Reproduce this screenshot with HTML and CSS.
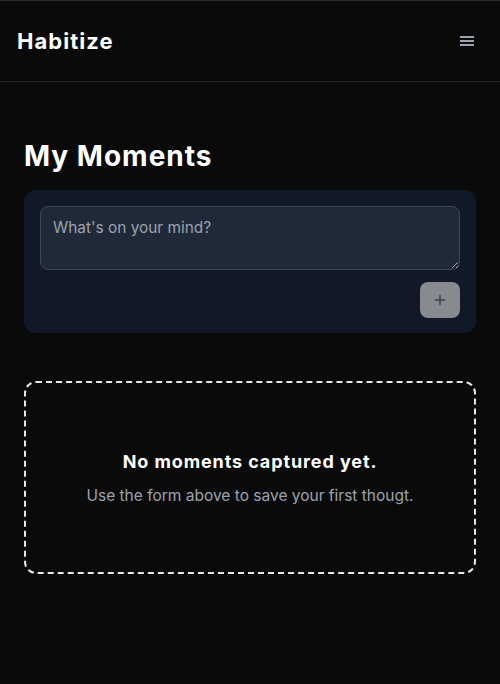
FILE: index.html
```html
<!DOCTYPE html>
<html lang="en">
<head>
<meta charset="utf-8">
<title>Habitize</title>
<link rel="stylesheet" href="styles.css">
</head>
<body>
<header class="topbar">
  <div class="brand">Habitize</div>
  <button class="menu-btn" aria-label="Menu">
    <svg width="14" height="10" viewBox="0 0 14 10"><rect x="0" y="0" width="14" height="2" fill="#9ca3af"/><rect x="0" y="4" width="14" height="2" fill="#9ca3af"/><rect x="0" y="8" width="14" height="2" fill="#9ca3af"/></svg>
  </button>
</header>
<main class="content">
  <h1 class="page-title">My Moments</h1>
  <form class="composer">
    <textarea class="composer-input" placeholder="What's on your mind?"></textarea>
    <div class="composer-actions">
      <button type="button" class="add-btn" aria-label="Add">
        <svg width="12" height="12" viewBox="0 0 12 12"><path d="M6 1v10M1 6h10" stroke="#374151" stroke-width="1.5"/></svg>
      </button>
    </div>
  </form>
  <section class="empty">
    <h2 class="empty-title">No moments captured yet.</h2>
    <p class="empty-text">Use the form above to save your first thougt.</p>
  </section>
</main>
</body>
</html>
```
FILE: styles.css
```css
* { box-sizing: border-box; }
html, body { margin: 0; padding: 0; }
body {
  background: #0a0a0a;
  color: #fff;
  font-family: Inter, "Noto Sans", sans-serif;
  min-height: 684px;
}
.topbar {
  height: 82px;
  border-top: 1px solid #2b2b2e;
  border-bottom: 1px solid #1f2530;
  display: flex;
  align-items: center;
  justify-content: space-between;
  padding: 0 20px 0 17px;
}
.brand {
  font-size: 22px;
  font-weight: 700;
  letter-spacing: 1.05px;
}
.menu-btn {
  background: none;
  border: 0;
  padding: 0;
  display: flex;
  width: 14px;
  height: 10px;
  margin-right: 6px;
}
.content {
  padding: 56px 24px 24px;
}
.page-title {
  margin: 0 0 16px;
  font-size: 28px;
  line-height: 36px;
  font-weight: 700;
  letter-spacing: 1px;
}
.composer {
  background: #111827;
  border-radius: 12px;
  padding: 16px 16px 15px;
  display: flex;
  flex-direction: column;
  gap: 12px;
}
.composer-input {
  height: 64px;
  background: #1f2937;
  border: 1px solid #3b4658;
  border-radius: 8px;
  padding: 11px 12px;
  font-family: inherit;
  font-size: 15.4px;
  color: #fff;
  resize: vertical;
}
.composer-input::placeholder { color: #9ca3af; }
.composer-actions {
  display: flex;
  justify-content: flex-end;
}
.add-btn {
  width: 40px;
  height: 36px;
  border: 0;
  border-radius: 8px;
  background: #878a91;
  display: flex;
  align-items: center;
  justify-content: center;
  padding: 0;
}
.empty {
  margin-top: 48px;
  border: 2px dashed #e5e7eb;
  border-radius: 12px;
  padding: 65px 16px 64px;
  text-align: center;
}
.empty-title {
  margin: 0;
  font-size: 18px;
  line-height: 28px;
  font-weight: 700;
  letter-spacing: 0.9px;
}
.empty-text {
  margin: 8px 0 0;
  font-size: 15.5px;
  line-height: 24px;
  color: #9ca3af;
}
```
